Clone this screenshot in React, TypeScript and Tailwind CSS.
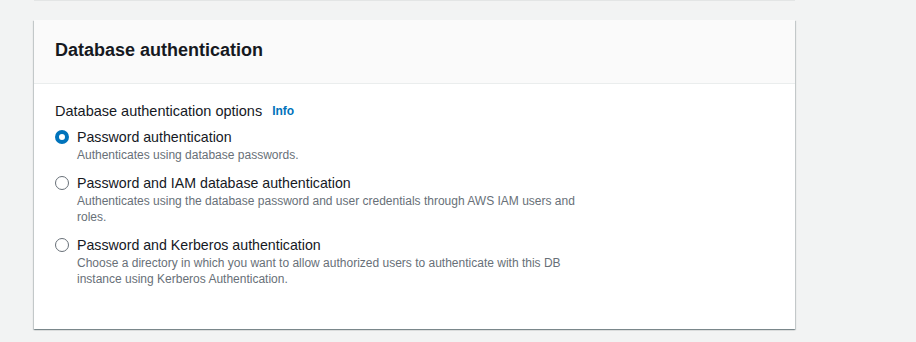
import React from 'react';

const OPTIONS = [
  {
    title: 'Password authentication',
    desc: ['Authenticates using database passwords.'],
    checked: true,
  },
  {
    title: 'Password and IAM database authentication',
    desc: [
      'Authenticates using the database password and user credentials through AWS IAM users and',
      'roles.',
    ],
    checked: false,
  },
  {
    title: 'Password and Kerberos authentication',
    desc: [
      'Choose a directory in which you want to allow authorized users to authenticate with this DB',
      'instance using Kerberos Authentication.',
    ],
    checked: false,
  },
];

function Radio({ checked }: { checked: boolean }) {
  return checked ? (
    <span className="mt-[3px] block h-[14px] w-[14px] shrink-0 rounded-full border-[4px] border-[#0073bb] bg-white" />
  ) : (
    <span className="mt-[3px] block h-[14px] w-[14px] shrink-0 rounded-full border border-[#687078] bg-white" />
  );
}

export default function App() {
  return (
    <div
      className="min-h-[342px] w-[916px] bg-[#f2f3f3] pl-[34px]"
      style={{ fontFamily: '"Liberation Sans", Arial, sans-serif' }}
    >
      {/* bottom edge of the previous card */}
      <div className="h-px w-[761px] bg-[#e3e5e5]" />

      <div className="mt-[19px] w-[761px] bg-white shadow-[0_1px_1px_0_rgba(0,28,36,0.3),1px_1px_1px_0_rgba(0,28,36,0.15),-1px_1px_1px_0_rgba(0,28,36,0.15)]">
        {/* Header */}
        <div className="flex h-[64px] items-center border-b border-[#eaeded] bg-[#fafafa] px-[21px] pb-[4px]">
          <h2 className="text-[18px] font-bold leading-[22px] text-[#16191f]">Database authentication</h2>
        </div>

        {/* Body */}
        <div className="px-[21px] pt-[16px] pb-[42px]">
          <div className="flex items-center gap-[10px] text-[14.5px] leading-[22px] text-[#16191f]">
            <span>Database authentication options</span>
            <span className="text-[12px] font-bold text-[#0073bb]">Info</span>
          </div>

          <div className="mt-[5px] flex flex-col gap-[10px]">
            {OPTIONS.map(o => (
              <div key={o.title} className="flex gap-[8px]">
                <Radio checked={o.checked} />
                <div className="flex flex-col">
                  <span className="text-[14.2px] leading-[20px] text-[#16191f]">{o.title}</span>
                  <span className="text-[12px] leading-[16px] text-[#687078]">
                    {o.desc.map((l, i) => (
                      <span key={i} className="block">{l}</span>
                    ))}
                  </span>
                </div>
              </div>
            ))}
          </div>
        </div>
      </div>
    </div>
  );
}
